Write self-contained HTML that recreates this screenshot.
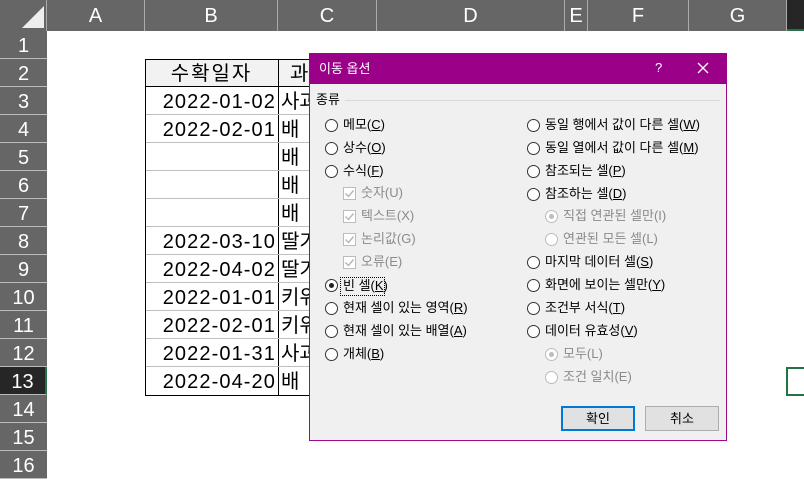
<!DOCTYPE html>
<html><head><meta charset="utf-8"><style>
*{margin:0;padding:0;box-sizing:border-box}
body{width:804px;height:474px;overflow:hidden;background:#fff;position:relative;font-family:"Liberation Sans","Noto Sans CJK KR",sans-serif}
.a{position:absolute}
.ch{position:absolute;top:0;height:31px;background:#666;color:#fff;font-size:20px;text-align:center;line-height:32px;border-right:1px solid #aaa}
.rh{position:absolute;left:0;width:47px;height:28px;background:#666;color:#fff;font-size:20px;text-align:center;line-height:30px;border-bottom:1px solid #bbb}
.cell{position:absolute;height:28px;font-size:20px;line-height:30px;color:#000;white-space:nowrap;overflow:hidden}
.dt{letter-spacing:1.1px}
.d{font-size:13px;color:#000;position:absolute;white-space:nowrap;line-height:16px}
.g{color:#8a8a8a}
.r{position:absolute;width:13px;height:13px;border:1px solid #333;border-radius:50%;background:#fff}
.r.dis{border-color:#bcbcbc}
.cb{position:absolute;width:13px;height:13px;border:1px solid #bcbcbc;background:#fff}
u{text-decoration:underline}
</style></head><body>
<div class="a" style="left:0;top:0;width:804px;height:31px;background:#666"></div>
<div class="a" style="left:0;top:0;width:47px;height:31px;background:#666;border-right:1px solid #aaa"></div>
<svg class="a" style="left:22px;top:6px" width="22" height="22"><polygon points="22,0 22,22 0,22" fill="#eee"/></svg>
<div class="ch" style="left:47px;width:98px">A</div>
<div class="ch" style="left:145px;width:133px">B</div>
<div class="ch" style="left:278px;width:99px">C</div>
<div class="ch" style="left:377px;width:188px">D</div>
<div class="ch" style="left:565px;width:23px">E</div>
<div class="ch" style="left:588px;width:101px">F</div>
<div class="ch" style="left:689px;width:98px">G</div>
<div class="a" style="left:787px;top:0;width:17px;height:31px;background:#262626;border-bottom:2px solid #217346"></div>
<div class="rh" style="top:31px">1</div><div class="rh" style="top:59px">2</div><div class="rh" style="top:87px">3</div><div class="rh" style="top:115px">4</div><div class="rh" style="top:143px">5</div><div class="rh" style="top:171px">6</div><div class="rh" style="top:199px">7</div><div class="rh" style="top:227px">8</div><div class="rh" style="top:255px">9</div><div class="rh" style="top:283px">10</div><div class="rh" style="top:311px">11</div><div class="rh" style="top:339px">12</div>
<div class="rh" style="top:367px;background:#262626;border-right:2px solid #217346">13</div>
<div class="rh" style="top:395px">14</div><div class="rh" style="top:423px">15</div><div class="rh" style="top:451px">16</div>
<div class="a" style="left:145px;top:59px;width:180px;height:28px;background:#f2f2f2"></div>
<div class="a" style="left:145px;top:59px;width:180px;height:337px;border:1px solid #000;border-right:none"></div>
<div class="a" style="left:278px;top:59px;width:1px;height:337px;background:#000"></div>
<div class="a" style="left:145px;top:86px;width:180px;height:1px;background:#000"></div>
<div class="a" style="left:146px;top:114px;width:180px;height:1px;background:#bfbfbf"></div>
<div class="a" style="left:146px;top:142px;width:180px;height:1px;background:#bfbfbf"></div>
<div class="a" style="left:146px;top:170px;width:180px;height:1px;background:#bfbfbf"></div>
<div class="a" style="left:146px;top:198px;width:180px;height:1px;background:#bfbfbf"></div>
<div class="a" style="left:146px;top:226px;width:180px;height:1px;background:#bfbfbf"></div>
<div class="a" style="left:146px;top:254px;width:180px;height:1px;background:#bfbfbf"></div>
<div class="a" style="left:146px;top:282px;width:180px;height:1px;background:#bfbfbf"></div>
<div class="a" style="left:146px;top:310px;width:180px;height:1px;background:#bfbfbf"></div>
<div class="a" style="left:146px;top:338px;width:180px;height:1px;background:#bfbfbf"></div>
<div class="a" style="left:146px;top:366px;width:180px;height:1px;background:#bfbfbf"></div>
<div class="cell" style="left:145px;top:59px;width:133px;text-align:center;letter-spacing:2px">수확일자</div>
<div class="cell" style="left:290px;top:59px">과일</div>
<div class="cell dt" style="left:145px;top:87px;width:131px;text-align:right">2022-01-02</div>
<div class="cell dt" style="left:145px;top:115px;width:131px;text-align:right">2022-02-01</div>
<div class="cell dt" style="left:145px;top:227px;width:131px;text-align:right">2022-03-10</div>
<div class="cell dt" style="left:145px;top:255px;width:131px;text-align:right">2022-04-02</div>
<div class="cell dt" style="left:145px;top:283px;width:131px;text-align:right">2022-01-01</div>
<div class="cell dt" style="left:145px;top:311px;width:131px;text-align:right">2022-02-01</div>
<div class="cell dt" style="left:145px;top:339px;width:131px;text-align:right">2022-01-31</div>
<div class="cell dt" style="left:145px;top:367px;width:131px;text-align:right">2022-04-20</div>
<div class="cell" style="left:281px;top:87px">사과</div><div class="cell" style="left:281px;top:115px">배</div><div class="cell" style="left:281px;top:143px">배</div><div class="cell" style="left:281px;top:171px">배</div><div class="cell" style="left:281px;top:199px">배</div><div class="cell" style="left:281px;top:227px">딸기</div><div class="cell" style="left:281px;top:255px">딸기</div><div class="cell" style="left:281px;top:283px">키위</div><div class="cell" style="left:281px;top:311px">키위</div><div class="cell" style="left:281px;top:339px">사과</div><div class="cell" style="left:281px;top:367px">배</div>
<div class="a" style="left:786px;top:367px;width:30px;height:29px;border:2px solid #217346"></div>
<div class="a" style="left:309px;top:53px;width:418px;height:388px;background:#f0f0f0;border:1px solid #9b0a8c"></div>
<div class="a" style="left:309px;top:53px;width:418px;height:31px;background:#9b0088"></div>
<div class="d" style="left:319px;top:61px;color:#fff;font-size:13px">이동 옵션</div>
<div class="d" style="left:655px;top:60px;color:#fff;font-size:13px">?</div>
<svg class="a" style="left:697px;top:62px" width="12" height="12"><path d="M1 1L11 11M11 1L1 11" stroke="#fff" stroke-width="1.3"/></svg>
<div class="d" style="left:316px;top:92px">종류</div>
<div class="a" style="left:345px;top:100px;width:375px;height:1px;background:#d8d8d8"></div>
<div class="r" style="left:325px;top:119px"></div><div class="d" style="left:343px;top:117px">메모(<u>C</u>)</div>
<div class="r" style="left:325px;top:142px"></div><div class="d" style="left:343px;top:140px">상수(<u>O</u>)</div>
<div class="r" style="left:325px;top:165px"></div><div class="d" style="left:343px;top:163px">수식(<u>F</u>)</div>
<div class="cb" style="left:343px;top:187px"></div><div class="d g" style="left:361px;top:185px">숫자(U)</div>
<div class="cb" style="left:343px;top:210px"></div><div class="d g" style="left:361px;top:208px">텍스트(X)</div>
<div class="cb" style="left:343px;top:233px"></div><div class="d g" style="left:361px;top:231px">논리값(G)</div>
<div class="cb" style="left:343px;top:256px"></div><div class="d g" style="left:361px;top:254px">오류(E)</div>
<svg class="a" style="left:343px;top:187px" width="13" height="82"><g fill="none" stroke="#b5b5b5" stroke-width="1.4"><path d="M2.5 6.5l3 3 5-6"/><path d="M2.5 29.5l3 3 5-6"/><path d="M2.5 52.5l3 3 5-6"/><path d="M2.5 75.5l3 3 5-6"/></g></svg>
<div class="r" style="left:325px;top:279px"></div><div class="a" style="left:329px;top:283px;width:5px;height:5px;border-radius:50%;background:#222"></div>
<div class="a" style="left:340px;top:277px;width:45px;height:19px;border:1px dotted #000"></div>
<div class="d" style="left:343px;top:278px">빈 셀(<u>K</u>)</div>
<div class="r" style="left:325px;top:302px"></div><div class="d" style="left:343px;top:300px">현재 셀이 있는 영역(<u>R</u>)</div>
<div class="r" style="left:325px;top:325px"></div><div class="d" style="left:343px;top:323px">현재 셀이 있는 배열(<u>A</u>)</div>
<div class="r" style="left:325px;top:348px"></div><div class="d" style="left:343px;top:346px">개체(<u>B</u>)</div>
<div class="r" style="left:527px;top:119px"></div><div class="d" style="left:545px;top:117px">동일 행에서 값이 다른 셀(<u>W</u>)</div>
<div class="r" style="left:527px;top:142px"></div><div class="d" style="left:545px;top:140px">동일 열에서 값이 다른 셀(<u>M</u>)</div>
<div class="r" style="left:527px;top:165px"></div><div class="d" style="left:545px;top:163px">참조되는 셀(<u>P</u>)</div>
<div class="r" style="left:527px;top:188px"></div><div class="d" style="left:545px;top:186px">참조하는 셀(<u>D</u>)</div>
<div class="r dis" style="left:545px;top:210px"></div><div class="a" style="left:549px;top:214px;width:5px;height:5px;border-radius:50%;background:#bcbcbc"></div><div class="d g" style="left:563px;top:208px">직접 연관된 셀만(I)</div>
<div class="r dis" style="left:545px;top:233px"></div><div class="d g" style="left:563px;top:231px">연관된 모든 셀(L)</div>
<div class="r" style="left:527px;top:256px"></div><div class="d" style="left:545px;top:254px">마지막 데이터 셀(<u>S</u>)</div>
<div class="r" style="left:527px;top:279px"></div><div class="d" style="left:545px;top:277px">화면에 보이는 셀만(<u>Y</u>)</div>
<div class="r" style="left:527px;top:302px"></div><div class="d" style="left:545px;top:300px">조건부 서식(<u>T</u>)</div>
<div class="r" style="left:527px;top:325px"></div><div class="d" style="left:545px;top:323px">데이터 유효성(<u>V</u>)</div>
<div class="r dis" style="left:545px;top:348px"></div><div class="a" style="left:549px;top:352px;width:5px;height:5px;border-radius:50%;background:#bcbcbc"></div><div class="d g" style="left:563px;top:346px">모두(L)</div>
<div class="r dis" style="left:545px;top:371px"></div><div class="d g" style="left:563px;top:369px">조건 일치(E)</div>
<div class="a" style="left:561px;top:406px;width:74px;height:25px;background:#e1e1e1;border:2px solid #0078d7"></div>
<div class="d" style="left:561px;top:411px;width:74px;text-align:center">확인</div>
<div class="a" style="left:645px;top:406px;width:74px;height:25px;background:#e1e1e1;border:1px solid #adadad"></div>
<div class="d" style="left:645px;top:411px;width:74px;text-align:center">취소</div>
</body></html>
